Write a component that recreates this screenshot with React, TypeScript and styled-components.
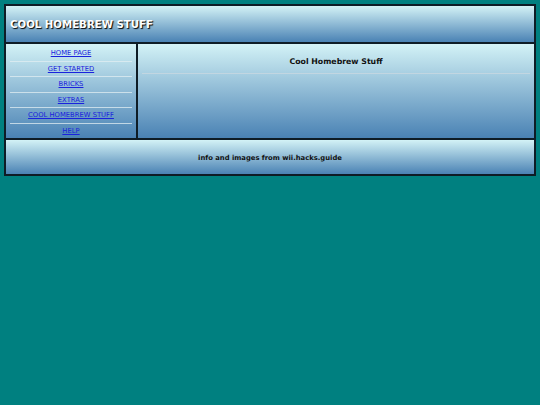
import styled, { createGlobalStyle } from "styled-components";

const GlobalStyle = createGlobalStyle`
  html, body {
    margin: 0;
    padding: 0;
    background: #008080;
  }
  body {
    padding: 4px;
    font-family: "DejaVu Sans", Verdana, sans-serif;
  }
`;

const Frame = styled.div`
  width: 532px;
  box-sizing: border-box;
  display: grid;
  grid-template-columns: 130px 1fr;
  grid-template-rows: 36px 94px 34px;
  gap: 2px;
  padding: 2px;
  background: #0e1c26;
`;

const Cell = styled.div`
  background: linear-gradient(#d3f2f6, #4a82b4);
`;

const Header = styled(Cell)`
  grid-column: 1 / 3;
  display: flex;
  align-items: center;
  padding-left: 4px;
`;

const Title = styled.h1`
  margin: 0;
  font-size: 10.2px;
  font-weight: bold;
  color: #ffffff;
  text-shadow: 1px 1px 1px #000;
`;

const Nav = styled(Cell)`
  display: flex;
  flex-direction: column;
  padding: 2px 4px 0;
`;

const NavItem = styled.a<{ $last?: boolean }>`
  display: block;
  text-align: center;
  font-size: 6.8px;
  color: #1a22dd;
  text-decoration: underline;
  height: 15.6px;
  line-height: 15px;
  box-sizing: border-box;
  border-bottom: ${({ $last }) =>
    $last ? "none" : "1px solid rgba(225, 238, 242, 0.75)"};
`;

const Content = styled(Cell)`
  padding: 13px 4px 0;
`;

const Heading = styled.h2`
  margin: 0;
  font-size: 7.8px;
  line-height: 9px;
  font-weight: bold;
  color: #111;
  text-align: center;
  padding-bottom: 7px;
  border-bottom: 1px solid rgba(200, 215, 225, 0.8);
`;

const Footer = styled(Cell)`
  grid-column: 1 / 3;
  display: flex;
  align-items: center;
  justify-content: center;
  padding-top: 1px;
  font-size: 6.8px;
  font-weight: bold;
  color: #111;
`;

const links = [
  "HOME PAGE",
  "GET STARTED",
  "BRICKS",
  "EXTRAS",
  "COOL HOMEBREW STUFF",
  "HELP",
];

export default function App() {
  return (
    <>
      <GlobalStyle />
      <Frame>
        <Header>
          <Title>COOL HOMEBREW STUFF</Title>
        </Header>
        <Nav>
          {links.map((l, i) => (
            <NavItem key={l} href="#" $last={i === links.length - 1}>
              {l}
            </NavItem>
          ))}
        </Nav>
        <Content>
          <Heading>Cool Homebrew Stuff</Heading>
        </Content>
        <Footer>info and images from wii.hacks.guide</Footer>
      </Frame>
    </>
  );
}
